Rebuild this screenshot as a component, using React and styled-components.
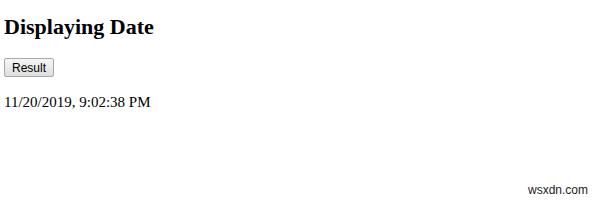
import React from "react";
import styled, { createGlobalStyle } from "styled-components";

const GlobalStyle = createGlobalStyle`
  html, body {
    margin: 0;
    padding: 0;
    background: #ffffff;
  }
  body {
    font-family: "Liberation Serif", "Times New Roman", serif;
    color: #000;
  }
`;

const Page = styled.div`
  position: relative;
  width: 600px;
  height: 205px;
  padding: 14px 4px 0;
  box-sizing: border-box;
  overflow: hidden;
`;

const Title = styled.h2`
  margin: 0 0 18px;
  font-size: 22px;
  font-weight: bold;
  line-height: 26px;
`;

const Button = styled.button`
  display: block;
  height: 19px;
  width: 50px;
  padding: 0;
  font-family: "Liberation Sans", Arial, sans-serif;
  font-size: 12px;
  color: #000;
  background: linear-gradient(#f6f6f6, #dedede);
  border: 1px solid #a9a9a9;
  border-radius: 2px;
`;

const Output = styled.p`
  margin: 16px 0 0;
  font-size: 15px;
  line-height: 18px;
`;

const Watermark = styled.span`
  position: absolute;
  right: 12px;
  bottom: 8px;
  font-family: "Liberation Sans", Arial, sans-serif;
  font-size: 12px;
  color: #222;
`;

export default function App() {
  return (
    <>
      <GlobalStyle />
      <Page>
        <Title>Displaying Date</Title>
        <Button>Result</Button>
        <Output>11/20/2019, 9:02:38 PM</Output>
        <Watermark>wsxdn.com</Watermark>
      </Page>
    </>
  );
}
